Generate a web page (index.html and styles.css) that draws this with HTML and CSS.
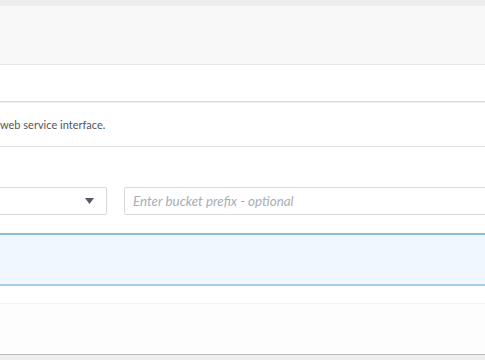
FILE: index.html
```html
<!DOCTYPE html>
<html lang="en">
<head>
    <meta charset="UTF-8">
    <title>S3 Bucket Settings</title>
    <link rel="stylesheet" href="styles.css">
</head>
<body>
    <div class="top-strip"></div>
    <div class="page-header"></div>
    <div class="tab-row"></div>

    <div class="description">
        <p>web service interface.</p>
    </div>

    <div class="form-area">
        <div class="field-row">
            <div class="select-box">
                <svg class="caret" width="9" height="6" viewBox="0 0 9 6">
                    <path d="M0 0 H9 L4.5 6 Z" fill="#545b64"/>
                </svg>
            </div>
            <input class="prefix-input" type="text" placeholder="Enter bucket prefix - optional">
        </div>

        <div class="info-box"></div>
    </div>

    <div class="footer-panel"></div>
    <div class="bottom-strip"></div>
</body>
</html>
```

FILE: styles.css
```css
body {
    margin: 0;
    font-family: Lato, "Open Sans", sans-serif;
    background-color: #ffffff;
    overflow: hidden;
}

.top-strip {
    height: 6px;
    background-color: #eceeed;
}

.page-header {
    height: 58px;
    background-color: #f8f8f8;
    border-bottom: 1px solid #e6e6e6;
}

.tab-row {
    height: 36px;
    border-bottom: 1px solid #dcdcdc;
}

.description {
    height: 43px;
    border-top: 1px solid #ececec;
    border-bottom: 1px solid #e2e2e2;
    display: flex;
    align-items: center;
}

.description p {
    margin: 0;
    font-size: 11px;
    color: #555555;
}

.form-area {
    padding-top: 40px;
    padding-bottom: 17px;
}

.field-row {
    display: flex;
    gap: 17px;
    margin: 0 -20px 0 -4px;
}

.select-box {
    width: 97px;
    height: 26px;
    border: 1px solid #d5dbdb;
    border-radius: 2px;
    display: flex;
    align-items: center;
    justify-content: flex-end;
    padding-right: 12px;
}

.prefix-input {
    flex: 1;
    height: 26px;
    padding: 0 8px;
    border: 1px solid #d5dbdb;
    border-radius: 2px;
    font-family: Lato, "Open Sans", sans-serif;
    font-size: 13.4px;
}

.prefix-input::placeholder {
    color: #a7aeb6;
    font-style: italic;
}

.info-box {
    height: 49px;
    margin: 18px -4px 0;
    background-color: #f0f7fe;
    border: 2px solid #a6cdea;
    border-top-color: #8dbce2;
}

.footer-panel {
    height: 50px;
    border-top: 1px solid #f2f2f2;
    border-bottom: 1px solid #b9bdbd;
    background-color: #fdfdfd;
}

.bottom-strip {
    height: 10px;
    background-color: #eeeeee;
}
```
